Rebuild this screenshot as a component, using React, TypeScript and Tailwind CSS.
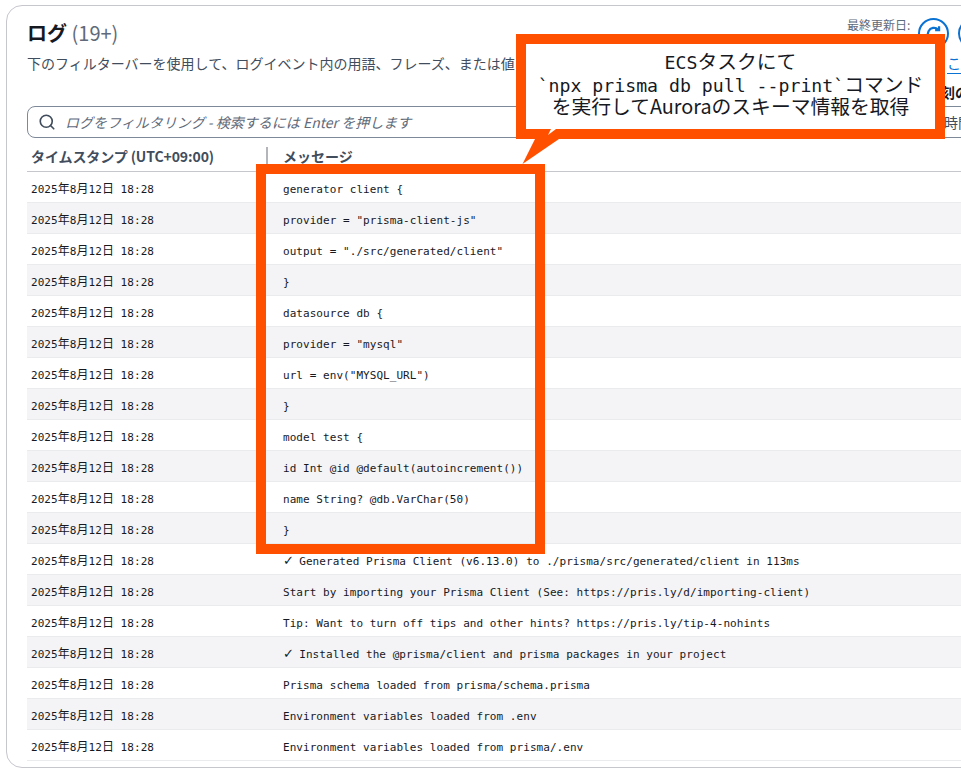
import { Search } from "lucide-react";

const MESSAGES = [
  "generator client {",
  'provider = "prisma-client-js"',
  'output = "./src/generated/client"',
  "}",
  "datasource db {",
  'provider = "mysql"',
  'url = env("MYSQL_URL")',
  "}",
  "model test {",
  "id Int @id @default(autoincrement())",
  "name String? @db.VarChar(50)",
  "}",
  "✓ Generated Prisma Client (v6.13.0) to ./prisma/src/generated/client in 113ms",
  "Start by importing your Prisma Client (See: https://pris.ly/d/importing-client)",
  "Tip: Want to turn off tips and other hints? https://pris.ly/tip-4-nohints",
  "✓ Installed the @prisma/client and prisma packages in your project",
  "Prisma schema loaded from prisma/schema.prisma",
  "Environment variables loaded from .env",
  "Environment variables loaded from prisma/.env",
];

function RefreshIcon() {
  return (
    <div className="w-[31px] h-[31px] rounded-full border-2 border-[#0972d3] flex items-center justify-center shrink-0 bg-white">
      <svg width="18" height="18" viewBox="0 0 16 16" fill="none" stroke="#0972d3" strokeWidth="2">
        <path d="M13.5 8a5.5 5.5 0 1 1-1.8-4" />
        <path d="M12.5 1v3.5H9" />
      </svg>
    </div>
  );
}

function Message({ text }: { text: string }) {
  if (text.startsWith("✓")) {
    return (
      <div className="whitespace-pre">
        <span className="inline-block w-[9.6px] text-[13px] leading-[12px] font-['DejaVu_Sans',sans-serif]">✓</span>
        {text.slice(1)}
      </div>
    );
  }
  return <div className="whitespace-pre">{text}</div>;
}

export default function App() {
  return (
    <div className="w-[961px] h-[778px] bg-white overflow-hidden relative font-['Noto_Sans_CJK_JP','Noto_Sans',sans-serif] text-[#16191f]">
      <div className="ml-[6px] mt-[5px] w-[1100px] h-[763px] rounded-[16px] border border-[#c6c6cd] bg-white pl-[20px] pr-[90px] overflow-hidden">
        {/* ヘッダー */}
        <div className="h-[100px]">
          <h2 className="text-[20px] leading-[24px] pt-[15px] h-[39px] font-bold">
            ログ <span className="font-normal text-[#5f6b7a]">(19+)</span>
          </h2>
          <div className="flex h-[36px] pt-[9px]">
            <p className="w-[920px] text-[14px] leading-[18px] text-[#414d5c] whitespace-nowrap">
              下のフィルターバーを使用して、ログイベント内の用語、フレーズ、または値
            </p>
            <span className="text-[14px] leading-[18px] text-[#0972d3] border-b border-[#0972d3] h-[20px]">こ</span>
          </div>
          <div className="pl-[914px] pt-[2px] text-[14px] leading-[18px] font-bold whitespace-nowrap">刻の</div>
        </div>

        {/* フィルター */}
        <div className="h-[32px] rounded-[8px] border border-[#7d8998] flex items-center pl-[10px]">
          <Search className="w-[18px] h-[18px] text-[#414d5c] shrink-0" strokeWidth={2.2} />
          <span className="w-[888px] pl-[9px] shrink-0 text-[14px] italic text-[#5f6b7a] whitespace-nowrap">
            ログをフィルタリング - 検索するには Enter を押します
          </span>
          <span className="text-[14px] text-[#414d5c] whitespace-nowrap">時間</span>
        </div>

        {/* テーブル */}
        <div className="flex h-[34px] items-center border-b border-[#c6c6cd] text-[14px] font-bold text-[#414d5c]">
          <div className="w-[239px] pl-[4px] mt-[3px] tracking-[-0.1px] whitespace-nowrap">タイムスタンプ (UTC+09:00)</div>
          <div className="border-l-2 border-[#b4b4bb] h-[20px] pl-[15px] leading-[18px] mt-[4px]">メッセージ</div>
        </div>
        {MESSAGES.map((msg, i) => (
          <div
            key={i}
            className={`flex h-[31px] pt-[9px] items-baseline border-b border-[#e9ebed] text-[11px] leading-[16px] tracking-[0.05px] font-['DejaVu_Sans_Mono','Noto_Sans_CJK_JP',monospace] ${i % 2 === 1 ? "bg-[#f4f4f6]" : "bg-white"}`}
          >
            <div className="w-[256px] pl-[4px] whitespace-pre">
              2025<span className="text-[12px]">年</span>8<span className="text-[12px]">月</span>12<span className="text-[12px]">日</span> 18:28
            </div>
            <Message text={msg} />
          </div>
        ))}
      </div>

      {/* 右上のボタン */}
      <span className="absolute left-[847px] top-[17px] text-[12px] leading-[16px] text-[#5f6b7a] whitespace-nowrap">最終更新日:</span>
      <div className="absolute left-[918px] top-[18px] flex gap-[9px]">
        <RefreshIcon />
        <RefreshIcon />
      </div>

      {/* 注釈: 赤枠と吹き出し */}
      <div className="absolute left-[256px] top-[164px] w-[289px] h-[390px] border-[10px] border-[#ff5000]" />
      <div className="absolute left-[516px] top-[34px] w-[429px] h-[105px] border-[10px] border-[#ff5000] bg-white flex flex-col items-center pt-[6px] text-[19.8px] leading-[22.5px] text-[#16191f] whitespace-pre">
        <div className="h-[22.5px]">
          <span className="text-[18.2px] font-['DejaVu_Sans_Mono',monospace]">ECS</span>タスクにて
        </div>
        <div className="h-[22.5px]">
          <span className="text-[18.2px] font-['DejaVu_Sans_Mono',monospace]">`npx prisma db pull --print`</span>コマンド
        </div>
        <div className="h-[22.5px]">を実行してAuroraのスキーマ情報を取得</div>
      </div>
      <svg className="absolute left-[516px] top-[125px]" width="50" height="40" viewBox="0 0 50 40">
        <polygon points="6.5,39 19,14 43,14" fill="#ff5000" />
        <polygon points="32,10 35,4 40,4" fill="#ffffff" />
      </svg>
    </div>
  );
}
